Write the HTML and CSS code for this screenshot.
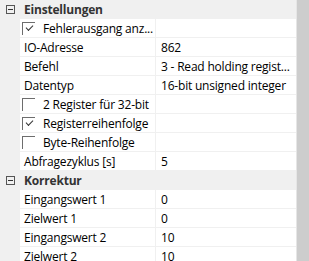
FILE: index.html
```html
<!DOCTYPE html>
<html>
<head>
    <title>Eigenschaften</title>
    <meta name="viewport" content="width=device-width, initial-scale=1">
    <link rel="stylesheet" href="styles.css">
</head>
<body>
    <div class="grid">
        <div class="props">
            <div class="cat"><span class="toggle"></span><span class="cat-name">Einstellungen</span></div>
            <div class="row">
                <div class="name"><span class="check on"></span>Fehlerausgang anz...</div>
                <div class="value"></div>
            </div>
            <div class="row">
                <div class="name">IO-Adresse</div>
                <div class="value">862</div>
            </div>
            <div class="row">
                <div class="name">Befehl</div>
                <div class="value">3 - Read holding regist...</div>
            </div>
            <div class="row">
                <div class="name">Datentyp</div>
                <div class="value">16-bit unsigned integer</div>
            </div>
            <div class="row">
                <div class="name"><span class="check"></span>2 Register für 32-bit</div>
                <div class="value"></div>
            </div>
            <div class="row">
                <div class="name"><span class="check on"></span>Registerreihenfolge</div>
                <div class="value"></div>
            </div>
            <div class="row">
                <div class="name"><span class="check"></span>Byte-Reihenfolge</div>
                <div class="value"></div>
            </div>
            <div class="row">
                <div class="name">Abfragezyklus [s]</div>
                <div class="value">5</div>
            </div>
            <div class="cat"><span class="toggle"></span><span class="cat-name">Korrektur</span></div>
            <div class="row">
                <div class="name">Eingangswert 1</div>
                <div class="value">0</div>
            </div>
            <div class="row">
                <div class="name">Zielwert 1</div>
                <div class="value">0</div>
            </div>
            <div class="row">
                <div class="name">Eingangswert 2</div>
                <div class="value">10</div>
            </div>
            <div class="row">
                <div class="name">Zielwert 2</div>
                <div class="value">10</div>
            </div>
        </div>
        <div class="scrollbar"></div>
    </div>
</body>
</html>
```

FILE: styles.css
```css
body {
    margin: 0;
    padding: 0;
    font-family: "Open Sans", "Noto Sans", sans-serif;
    font-size: 12px;
    letter-spacing: -0.2px;
    color: #000;
    background-color: #f0f0f0;
    overflow: hidden;
}

.grid {
    display: flex;
    height: 261px;
}

.props {
    width: 296px;
    background-color: #f0f0f0;
}

.cat {
    display: flex;
    align-items: center;
    height: 19px;
}

.toggle {
    position: relative;
    width: 7px;
    height: 7px;
    margin-left: 6px;
    border: 1px solid #555;
}

.toggle::after {
    content: "";
    position: absolute;
    left: 1px;
    top: 3px;
    width: 5px;
    height: 1px;
    background-color: #333;
}

.cat-name {
    margin-left: 9px;
    font-weight: bold;
    color: #333;
}

.row {
    display: flex;
    height: 18px;
    margin-left: 20px;
    background-color: #fff;
    border-bottom: 1px solid #f0f0f0;
}

.name, .value {
    display: flex;
    align-items: center;
    white-space: nowrap;
    overflow: hidden;
}

.name {
    width: 131px;
    padding-left: 4px;
    border-right: 1px solid #f0f0f0;
}

.value {
    flex: 1;
    padding-left: 5px;
}

.check {
    position: relative;
    width: 12px;
    height: 12px;
    margin-left: -2px;
    margin-right: 8px;
    border-left: 1px solid #6d6d6d;
    border-top: 1px solid #6d6d6d;
    flex-shrink: 0;
}

.check.on::after {
    content: "";
    position: absolute;
    left: 3px;
    top: 2px;
    width: 6px;
    height: 3px;
    border-left: 1px solid #333;
    border-bottom: 1px solid #333;
    transform: rotate(-45deg);
}

.scrollbar {
    flex: 1;
    background-color: #cdcdcd;
    border-left: 1px solid #e6e6e6;
}
```
